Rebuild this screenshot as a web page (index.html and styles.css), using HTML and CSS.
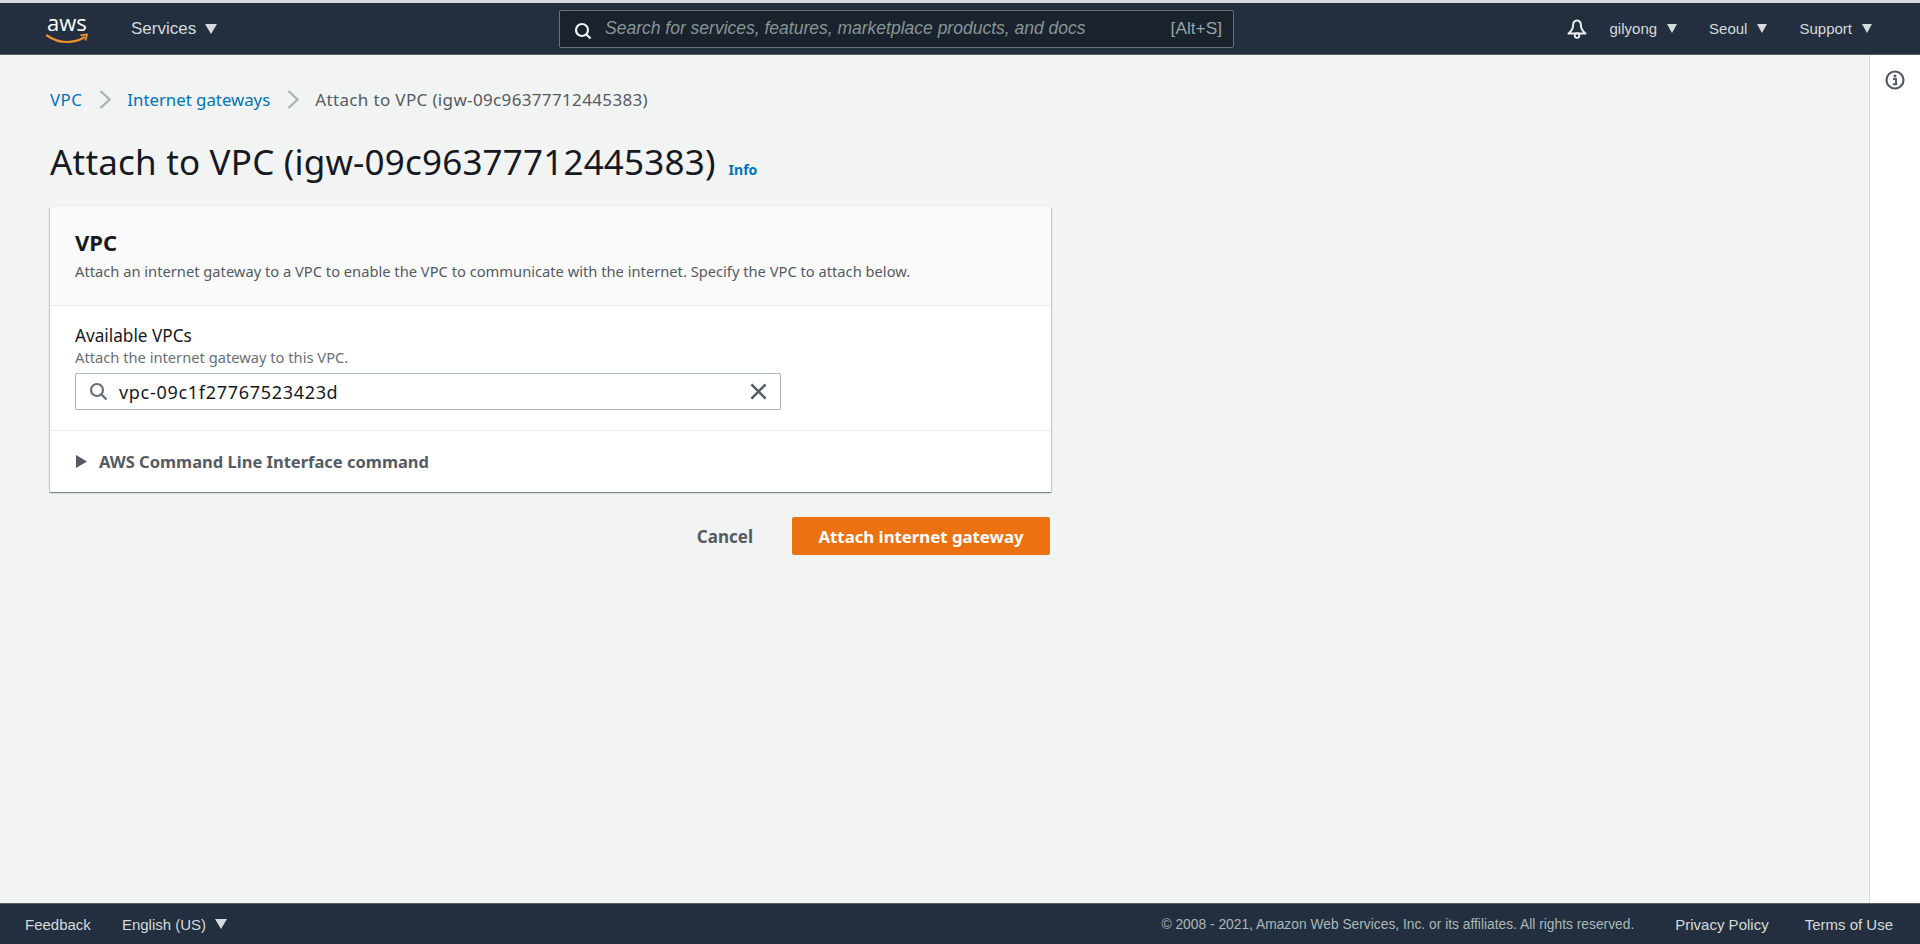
FILE: index.html
```html
<!DOCTYPE html>
<html lang="en">
<head>
<meta charset="utf-8">
<title>Attach to VPC</title>
<link rel="stylesheet" href="styles.css">
</head>
<body>
<header class="topbar">
  <div class="top-left">
    <a class="logo"><span class="logo-text">aws</span>
      <svg class="smile" width="42" height="11" viewBox="0 0 42 11"><path d="M1 2.500C8 7.500 15 9 21 9c6 0 12-1.500 17-4.500" fill="none" stroke="#ec912d" stroke-width="2.200" stroke-linecap="round"/><path d="M34.500 2.300L41 1.500L39.500 7.500" fill="none" stroke="#ec912d" stroke-width="1.800" stroke-linejoin="round"/></svg>
    </a>
    <span class="nav-item services">Services <i class="caret"></i></span>
  </div>
  <div class="search">
    <svg class="search-icon" width="18" height="18" viewBox="0 0 18 18"><circle cx="8" cy="8" r="6" fill="none" stroke="#f2f3f3" stroke-width="2.200"/><path d="M12.500 12.500L16.500 16.500" stroke="#f2f3f3" stroke-width="2.200"/></svg>
    <span class="search-text">Search for services, features, marketplace products, and docs</span>
    <span class="search-key">[Alt+S]</span>
  </div>
  <div class="top-right">
    <svg class="bell" width="20" height="20" viewBox="0 0 20 20"><path d="M10 1.500C6.800 1.500 6 4.500 6 7c0 3-1.500 5-4.500 7.500h17C15.500 12 14 10 14 7c0-2.500-.8-5.500-4-5.500z" fill="none" stroke="#eaeded" stroke-width="2" stroke-linejoin="round"/><circle cx="10" cy="16.500" r="2.300" fill="none" stroke="#eaeded" stroke-width="1.800"/></svg>
    <span class="nav-item user">gilyong <i class="caret caret-small"></i></span>
    <span class="nav-item region">Seoul <i class="caret caret-small"></i></span>
    <span class="nav-item support">Support <i class="caret caret-small"></i></span>
  </div>
</header>
<div class="body-row">
  <main class="content">
    <nav class="crumbs">
      <a class="link link-root">VPC</a>
      <svg class="chev" width="12" height="19" viewBox="0 0 12 19"><path d="M1.500 1L10.500 9.500L1.500 18" fill="none" stroke="#aab7b8" stroke-width="2.400"/></svg>
      <a class="link">Internet gateways</a>
      <svg class="chev" width="12" height="19" viewBox="0 0 12 19"><path d="M1.500 1L10.500 9.500L1.500 18" fill="none" stroke="#aab7b8" stroke-width="2.400"/></svg>
      <span class="crumb-current">Attach to VPC (igw-09c96377712445383)</span>
    </nav>
    <div class="title-row">
      <h1 class="title">Attach to VPC (igw-09c96377712445383)</h1>
      <a class="info">Info</a>
    </div>
    <section class="card">
      <div class="card-head">
        <h2 class="card-title">VPC</h2>
        <p class="card-desc">Attach an internet gateway to a VPC to enable the VPC to communicate with the internet. Specify the VPC to attach below.</p>
      </div>
      <div class="card-body">
        <div class="field-label">Available VPCs</div>
        <div class="field-hint">Attach the internet gateway to this VPC.</div>
        <div class="input">
          <svg class="input-icon" width="19" height="19" viewBox="0 0 19 19"><circle cx="8" cy="8" r="6" fill="none" stroke="#687078" stroke-width="2.200"/><path d="M12.500 12.500L17.500 17.500" stroke="#687078" stroke-width="2.400"/></svg>
          <span class="input-value">vpc-09c1f27767523423d</span>
          <svg class="clear" width="18" height="18" viewBox="0 0 18 18"><path d="M1.500 1.500L16.500 16.500M16.500 1.500L1.500 16.500" stroke="#545b64" stroke-width="2.600"/></svg>
        </div>
      </div>
      <div class="card-foot">
        <svg width="11" height="13" viewBox="0 0 11 13"><path d="M0 0L11 6.500L0 13Z" fill="#545b64"/></svg>
        <span class="expand-label">AWS Command Line Interface command</span>
      </div>
    </section>
    <div class="actions">
      <button class="btn-link">Cancel</button>
      <button class="btn-primary">Attach internet gateway</button>
    </div>
  </main>
  <aside class="side">
    <svg width="20" height="20" viewBox="0 0 20 20"><circle cx="10" cy="10" r="8.500" fill="none" stroke="#545b64" stroke-width="2.200"/><circle cx="10" cy="6" r="1.500" fill="#545b64"/><path d="M8 9h3v5h1.200M7.800 14.200h4.400" fill="none" stroke="#545b64" stroke-width="2"/></svg>
  </aside>
</div>
<footer class="footer">
  <div class="foot-left">
    <span class="foot-link">Feedback</span>
    <span class="foot-link lang">English (US) <i class="caret"></i></span>
  </div>
  <div class="foot-right">
    <span class="copyright">© 2008 - 2021, Amazon Web Services, Inc. or its affiliates. All rights reserved.</span>
    <span class="foot-link">Privacy Policy</span>
    <span class="foot-link">Terms of Use</span>
  </div>
</footer>
</body>
</html>
```
FILE: styles.css
```css
* { box-sizing: border-box; }
html, body { height: 100%; }
body {
  margin: 0;
  height: 944px;
  display: flex;
  flex-direction: column;
  overflow: hidden;
  font-family: "Noto Sans", sans-serif;
  background: #f2f3f3;
  color: #16191f;
}
.topbar {
  height: 55px;
  flex: none;
  border-top: 3px solid #d5dbdb;
  border-bottom: 1px solid #545b64;
  background: #232f3e;
  display: flex;
  align-items: center;
  font-family: "Liberation Sans", sans-serif;
  color: #d5dbdb;
}
.top-left { display: flex; align-items: center; width: 559px; padding-left: 46px; }
.logo { position: relative; width: 42px; height: 40px; display: block; margin-right: 43px; }
.logo-text { position: absolute; left: 1px; top: 0; color: #fff; font-size: 22px; line-height: 26px; font-family: "Open Sans", sans-serif; }
.smile { position: absolute; left: 0; top: 24px; }
.nav-item { display: inline-flex; align-items: center; font-size: 15px; white-space: nowrap; }
.services { font-size: 17px; }
.caret { display: inline-block; margin-left: 9px; width: 0; height: 0; border-left: 6px solid transparent; border-right: 6px solid transparent; border-top: 10px solid #d5dbdb; }
.caret-small { margin-left: 10px; border-left-width: 5.5px; border-right-width: 5.5px; border-top-width: 9px; }
.search {
  width: 675px;
  height: 38px;
  background: #1a222d;
  border: 1px solid #687078;
  border-radius: 2px;
  display: flex;
  align-items: center;
  padding: 0 11px 0 14px;
  font-size: 17.3px;
  color: #879596;
}
.search-icon { flex: none; margin-top: 4px; }
.search-text { margin-left: 13px; font-size: 17.5px; font-style: italic; flex: 1; }
.search-key { color: #95a5a6; }
.top-right { flex: 1; display: flex; align-items: center; justify-content: flex-end; padding-right: 48px; }
.bell { margin-right: 23px; }
.user { margin-right: 32px; }
.region { margin-right: 32px; }
.content { flex: 1; min-width: 0; padding: 32px 0 0 50px; }
.body-row { flex: 1; display: flex; min-height: 0; }
.side { width: 51px; flex: none; background: #fff; border-left: 1px solid #d5dbdb; padding: 15px 0 0 15px; }
.crumbs { display: flex; align-items: center; height: 24px; font-size: 16.8px; }
.link { color: #0073bb; }
.link-root { letter-spacing: .5px; }
.chev { margin: 0 16px 0 17px; }
.crumb-current { color: #545b64; font-size: 17px; letter-spacing: .35px; }
.title-row { display: flex; align-items: center; margin-top: 27px; height: 48px; }
.title { margin: 0; font-size: 35px; font-weight: 400; line-height: 48px; letter-spacing: .19px; }
.info { color: #0073bb; font-size: 14px; font-weight: 700; margin: 14px 0 0 13px; }
.card { width: 1001px; margin-top: 21px; background: #fff; box-shadow: 0 1px 1px 0 rgba(0,28,36,.3), 1px 1px 1px 0 rgba(0,28,36,.15), -1px 1px 1px 0 rgba(0,28,36,.15); }
.card-head { height: 99px; padding: 21px 25px 0; background: #fafafa; border-bottom: 1px solid #eaeded; }
.card-title { margin: 0; font-size: 22px; line-height: 28px; font-weight: 700; }
.card-desc { margin: 5px 0 0; font-size: 14.7px; line-height: 20px; color: #545b64; }
.card-body { height: 125px; padding: 19px 25px 0; border-bottom: 1px solid #eaeded; }
.field-label { font-size: 17.2px; line-height: 22px; }
.field-hint { margin-top: 1px; font-size: 14.7px; line-height: 18px; color: #687078; }
.input { width: 706px; height: 37px; margin-top: 7px; border: 1px solid #aab7b8; border-radius: 2px; display: flex; align-items: center; padding: 0 13px 0 13px; font-size: 18px; letter-spacing: .7px; }
.input-value { flex: 1; margin-left: 11px; }
.clear { width: 17px; height: 17px; }
.card-foot { height: 61px; padding: 0 25px 0 26px; display: flex; align-items: center; }
.expand-label { margin-left: 12px; font-size: 16.5px; font-weight: 700; color: #545b64; }
.actions { width: 1000px; margin-top: 25px; display: flex; justify-content: flex-end; align-items: center; }
.btn-link { border: 0; background: none; font: 700 17px "Noto Sans", sans-serif; color: #545b64; padding: 0; margin-right: 39px; }
.btn-primary { width: 258px; height: 38px; border: 0; border-radius: 2px; background: #ec7211; color: #fff; font: 700 16.8px "Noto Sans", sans-serif; }
.footer { height: 41px; flex: none; background: #232f3e; border-top: 1px solid #545b64; display: flex; align-items: center; justify-content: space-between; padding: 0 27px 0 25px; font-family: "Liberation Sans", sans-serif; font-size: 15px; color: #d5dbdb; }
.foot-left { display: flex; align-items: center; }
.foot-right { display: flex; align-items: center; }
.lang { margin-left: 31px; display: inline-flex; align-items: center; }
.copyright { font-size: 13.8px; color: #aab7b8; margin-right: 41px; }
.foot-right .foot-link + .foot-link { margin-left: 36px; }
```
